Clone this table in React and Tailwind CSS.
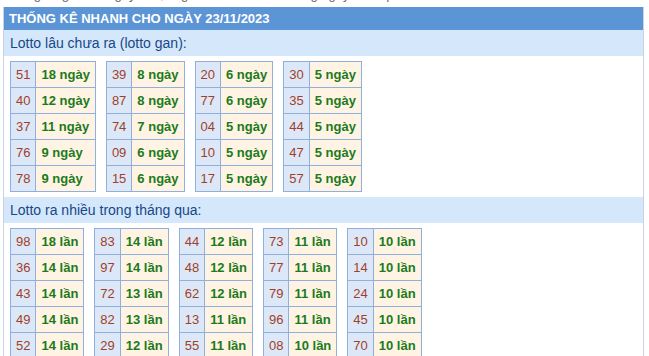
import React from 'react';

const ganData = [
    [['51', '18 ngày'], ['40', '12 ngày'], ['37', '11 ngày'], ['76', '9 ngày'], ['78', '9 ngày']],
    [['39', '8 ngày'], ['87', '8 ngày'], ['74', '7 ngày'], ['09', '6 ngày'], ['15', '6 ngày']],
    [['20', '6 ngày'], ['77', '6 ngày'], ['04', '5 ngày'], ['10', '5 ngày'], ['17', '5 ngày']],
    [['30', '5 ngày'], ['35', '5 ngày'], ['44', '5 ngày'], ['47', '5 ngày'], ['57', '5 ngày']],
];

const nhieuData = [
    [['98', '18 lần'], ['36', '14 lần'], ['43', '14 lần'], ['49', '14 lần'], ['52', '14 lần']],
    [['83', '14 lần'], ['97', '14 lần'], ['72', '13 lần'], ['82', '13 lần'], ['29', '12 lần']],
    [['44', '12 lần'], ['48', '12 lần'], ['62', '12 lần'], ['13', '11 lần'], ['55', '11 lần']],
    [['73', '11 lần'], ['77', '11 lần'], ['79', '11 lần'], ['96', '11 lần'], ['08', '10 lần']],
    [['10', '10 lần'], ['14', '10 lần'], ['24', '10 lần'], ['45', '10 lần'], ['70', '10 lần']],
];

const LotoTable = ({ rows }) => (
    <table className="border-collapse text-[13px] leading-[15px]">
        <tbody>
            {rows.map(([so, val]) => (
                <tr key={so}>
                    <td className="border border-[#8fb0dd] bg-[#dce8f8] px-[5px] py-[5px] text-[#a03f29]">{so}</td>
                    <td className="border border-[#8fb0dd] bg-[#fff4e4] px-[5px] py-[5px] font-bold text-[#1c7a1c] text-left whitespace-nowrap">{val}</td>
                </tr>
            ))}
        </tbody>
    </table>
);

const Section = ({ title, data }) => (
    <div>
        <div className="h-[26px] bg-[#d5e7fb] pl-[6px] flex items-center text-[14px] text-[#174887]">
            {title}
        </div>
        <div className="flex gap-[10px] pl-[6px] pt-[5px] pb-[5px]">
            {data.map((rows, i) => (
                <LotoTable key={i} rows={rows} />
            ))}
        </div>
    </div>
);

export default function App() {
    return (
        <div className="w-[649px] h-[356px] overflow-hidden bg-white font-['Liberation_Sans',Arial,sans-serif]">
            <div className="h-[7px] overflow-hidden pl-[4px]">
                <div className="-mt-[13px] text-[13px] leading-[15px] text-[#666]">
                    Thống kê giải ĐB ngày mai, lô gan và lô ra nhiều trong ngày hôm qua
                </div>
            </div>
            <div className="ml-[3px] w-[641px] border-x border-[#c9d2e2]">
                <div className="h-[23px] bg-[#5b95d6] pl-[5px] flex items-center text-[13px] font-bold text-white">
                    THỐNG KÊ NHANH CHO NGÀY 23/11/2023
                </div>
                <Section title="Lotto lâu chưa ra (lotto gan):" data={ganData} />
                <Section title="Lotto ra nhiều trong tháng qua:" data={nhieuData} />
            </div>
        </div>
    );
}
